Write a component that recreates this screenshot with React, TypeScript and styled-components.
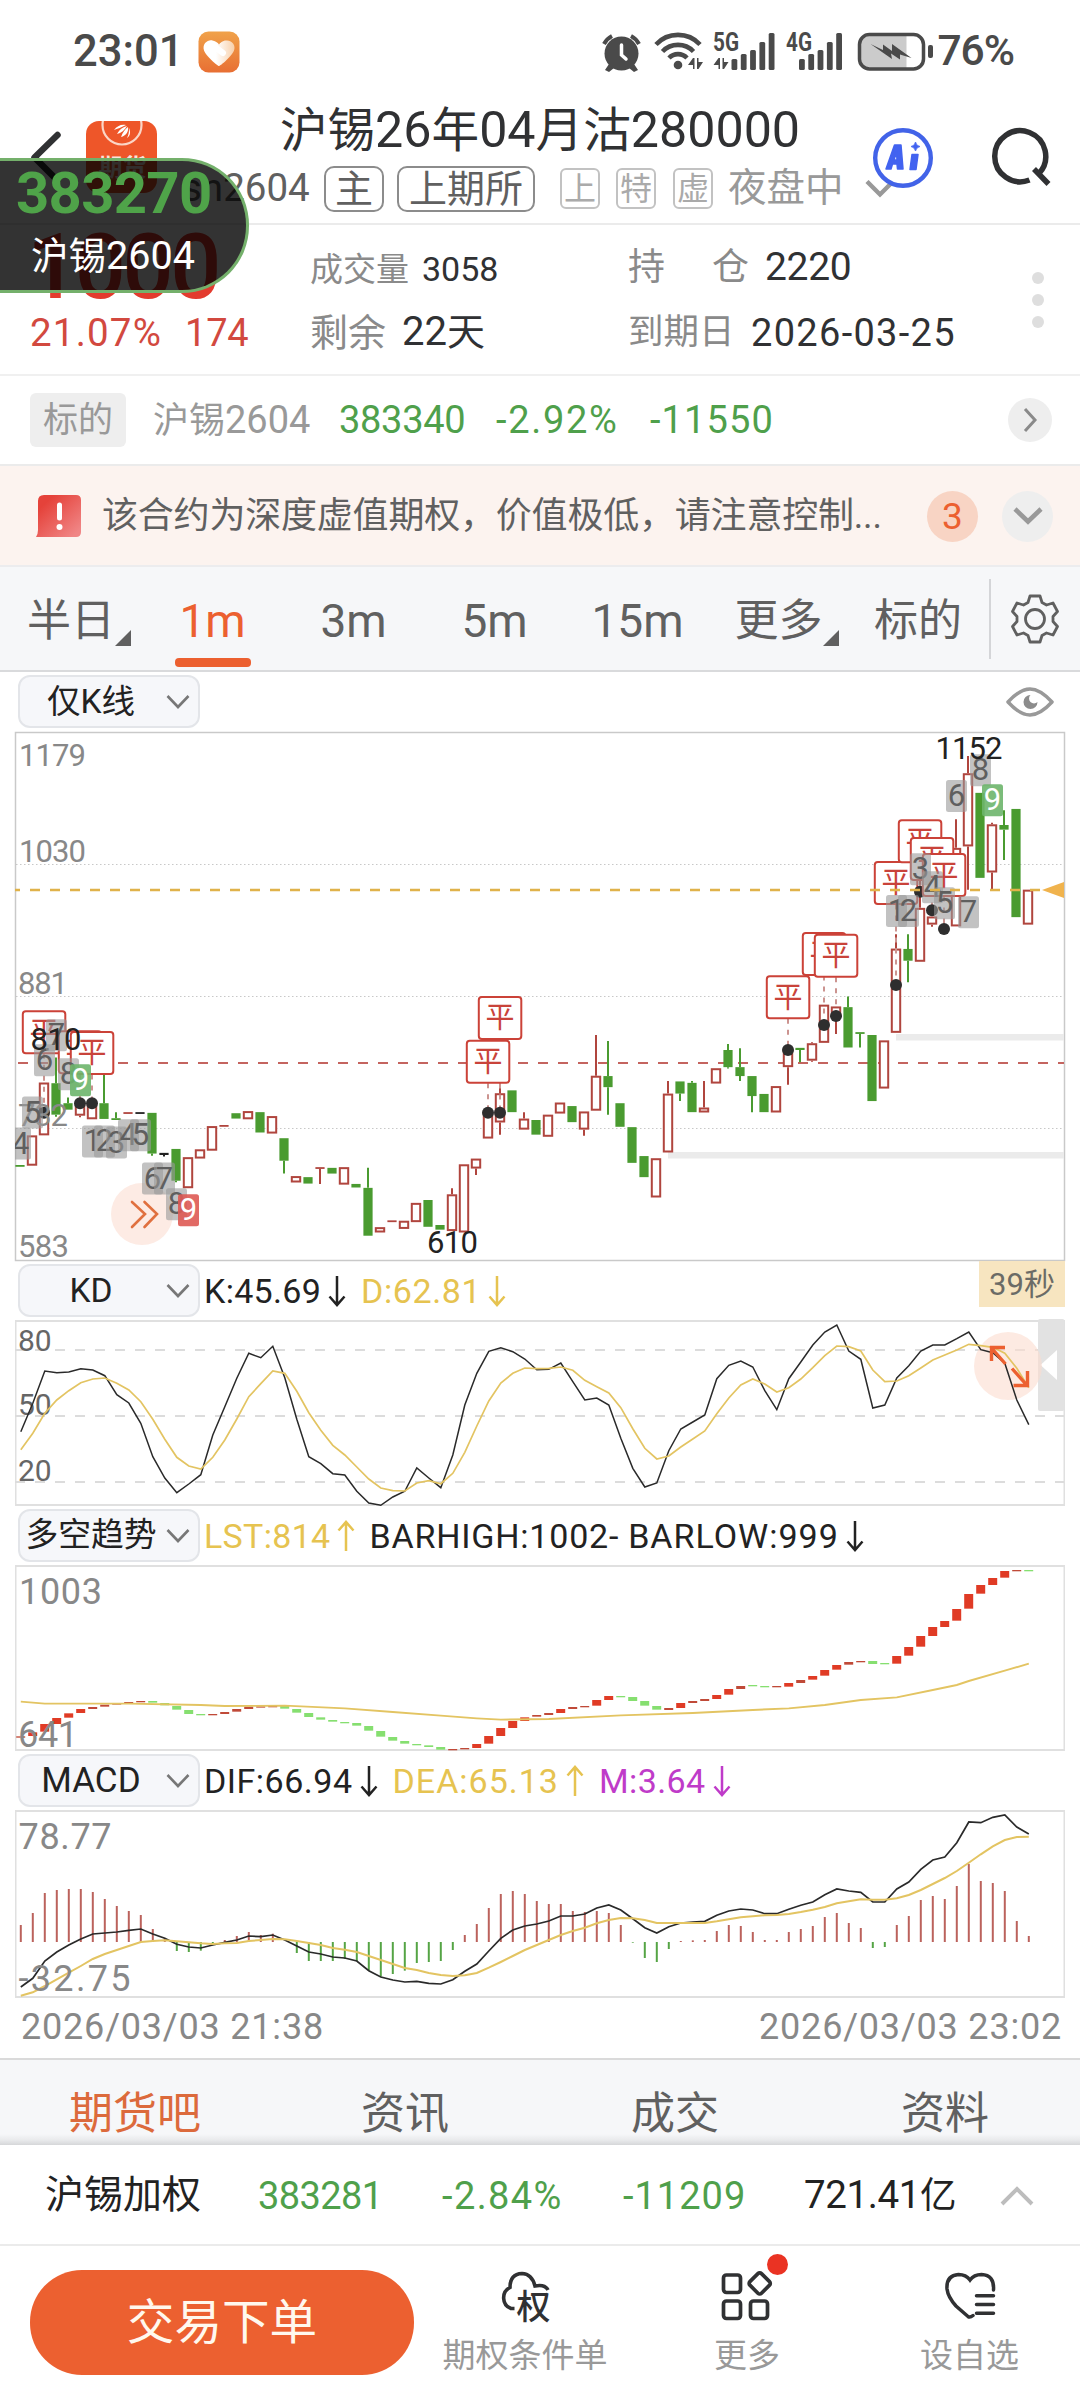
import React from "react";
import styled, { createGlobalStyle } from "styled-components";

const FONT = `Roboto, "Noto Sans CJK SC", sans-serif`;
const ORANGE = "#ec6030";
const GREEN = "#4fa04b";
const YELLOW = "#e6c350";
const INK = "#303133";

const Global = createGlobalStyle`
  * { box-sizing: border-box; }
  body { margin: 0; background: #fff; }
`;

const Screen = styled.main`
  position: relative;
  width: 1080px;
  height: 2400px;
  overflow: hidden;
  display: flex;
  flex-direction: column;
  background: #fff;
  font-family: ${FONT};
  line-height: 1;
  color: ${INK};
  svg { display: block; flex: none; }
  svg text { font-family: ${FONT}; }
`;

const Label = styled.span<{ $size: number; $color?: string; $ls?: number; $weight?: number; $ml?: number; $w?: number }>`
  flex: none;
  white-space: nowrap;
  font-size: ${(p) => p.$size}px;
  color: ${(p) => p.$color ?? INK};
  letter-spacing: ${(p) => p.$ls ?? 0}px;
  font-weight: ${(p) => p.$weight ?? 400};
  margin-left: ${(p) => p.$ml ?? 0}px;
  width: ${(p) => (p.$w ? `${p.$w}px` : "auto")};
`;

/* Digits set slightly larger than the ideographs they sit beside. */
const Num = styled.span`
  font-size: 1.055em;
`;

/* ---------- status bar ---------- */

const StatusBar = styled.div`
  height: 103px;
  padding: 30px 66px 30px 73px;
  display: flex;
  align-items: center;
`;
const Spacer = styled.div`
  flex: 1;
`;

const HeartIcon = styled.svg`
  margin-left: 15px;
`;

const HeartApp = () => (
  <HeartIcon width="42" height="42" viewBox="0 0 42 42">
    <defs>
      <linearGradient id="ha" x1="0" y1="0" x2="0" y2="1">
        <stop offset="0" stopColor="#f0a24a" />
        <stop offset="1" stopColor="#e86f33" />
      </linearGradient>
      <linearGradient id="hb" x1="0" y1="0" x2="1" y2="0">
        <stop offset="0.4" stopColor="#fff" />
        <stop offset="1" stopColor="#f8d0aa" />
      </linearGradient>
    </defs>
    <rect x="0.5" y="0.5" width="41" height="41" rx="10" fill="url(#ha)" />
    <path d="M21 35C19.500 35 8 25 6 19.500C4 13 9.500 8.500 14.500 9.500C18 10.300 20 12 21 13.500C22 12 25 9 29 9.500C34.500 10 38 14.500 36 19.500C33.500 25.500 22.500 35 21 35Z" fill="url(#hb)" />
    <path d="M13 13L25 22" stroke="#fff" strokeWidth="6" strokeLinecap="round" />
  </HeartIcon>
);

const sig = [58, 53, 49, 41, 32];
const StatusIcons = () => (
  <svg width="336" height="44" viewBox="600 29 336 44">
    <g fill="#4a4a4a">
      <circle cx="621.500" cy="52.500" r="17" />
      <path d="M609 63l5 4-5 4-4-2zM634 63l-5 4 5 4 4-2z" />
      <path d="M604 43a19 19 0 0 1 8-8" stroke="#4a4a4a" strokeWidth="4" fill="none" />
      <path d="M639 43a19 19 0 0 0-8-8" stroke="#4a4a4a" strokeWidth="4" fill="none" />
      <path d="M621.500 44V54L626 58" stroke="#fff" strokeWidth="3.500" fill="none" strokeLinecap="round" />
      <g fill="none" stroke="#4a4a4a" strokeWidth="4.600">
        <path d="M656 43.500a30 30 0 0 1 44 0" />
        <path d="M662.500 50.500a21.500 21.500 0 0 1 31 0" />
        <path d="M669 57a12.500 12.500 0 0 1 18 0" />
      </g>
      <circle cx="678" cy="64" r="4.300" />
      <path d="M688 64l5-7h1.500v11h-1.500v-4zM697 57l1.500 0v4h4.500l-4.500 7h-1.500z" />
      <path d="M713.500 64l5-7h1.500v11h-1.500v-4zM722.500 57l1.500 0v4h4.500l-4.500 7h-1.500z" />
      {sig.map((t, i) => (
        <rect key={i} x={731.5 + i * 9.3} y={t} width="5.800" height={69 - t} rx="1.500" />
      ))}
      {sig.map((t, i) => (
        <rect key={i} x={799 + i * 9.3} y={t} width="5.800" height={69 - t} rx="1.500" />
      ))}
      <text x="713" y="50" fontSize="25" fontWeight="700" textLength="26" lengthAdjust="spacingAndGlyphs">5G</text>
      <text x="786" y="50" fontSize="25" fontWeight="700" textLength="26" lengthAdjust="spacingAndGlyphs">4G</text>
      <path d="M870 35H906.500V67H870Q861 67 861 57V45Q861 35 870 35Z" fill="#cbcbcb" />
      <rect x="859.500" y="33.500" width="64" height="34.500" rx="10" fill="none" stroke="#4a4a4a" strokeWidth="3.500" />
      <rect x="928" y="44" width="5" height="13" rx="2" />
      <path d="M870.500 43L883 49V43.500L892 50V43L911.500 57L900 53.500V58.500L891 52.500L892 58Z" />
    </g>
  </svg>
);

/* ---------- header ---------- */

const Header = styled.header`
  height: 122px;
  border-bottom: 2px solid #ebebeb;
  display: grid;
  grid-template-columns: 170px 740px 170px;
`;
const HeaderLeft = styled.div`
  display: flex;
  align-items: flex-start;
  gap: 22px;
  padding: 18px 0 0 28px;
`;
const AppLogo = () => (
  <svg width="72" height="72" viewBox="0 0 72 72">
    <defs>
      <clipPath id="lg"><rect width="71" height="72" rx="13" /></clipPath>
    </defs>
    <g clipPath="url(#lg)">
      <rect width="71" height="72" fill="#ee5629" />
      <circle cx="36" cy="4" r="19.500" fill="#ee5629" stroke="#fbd5c6" strokeWidth="2.200" />
      <path d="M28 9C31 5 35 3 40 4C36 6 31 8 28 9ZM31 13C34 8 37 6 41 5C39 9 35 12 31 13ZM35 16C37 11 39 8 42 6C43 10 40 15 35 16ZM41 17C43 13 43 10 43 7C45 12 44 15 41 17Z" fill="#fff" />
      <text x="36.500" y="55" fontSize="24" fontWeight="700" textAnchor="middle" fill="#fbe3da">期货</text>
    </g>
  </svg>
);
const HeaderCenter = styled.div`
  padding-top: 0;
`;
const Title = styled.h1`
  margin: 0;
  height: 58px;
  line-height: 54px;
  text-align: center;
  font-size: 47.6px;
  font-weight: 400;
  white-space: nowrap;
  color: #303133;
`;
const SubRow = styled.div`
  height: 55px;
  padding-left: 12px;
  display: flex;
  align-items: center;
`;
const Tag = styled.span<{ $w: number; $ml: number; $small?: boolean }>`
  flex: none;
  width: ${(p) => p.$w}px;
  height: ${(p) => (p.$small ? 41 : 46)}px;
  margin-left: ${(p) => p.$ml}px;
  border: ${(p) => (p.$small ? "2px solid #c2c2c2" : "2px solid #8c8c8c")};
  border-radius: ${(p) => (p.$small ? 6 : 10)}px;
  color: ${(p) => (p.$small ? "#aaa" : "#606060")};
  font-size: ${(p) => (p.$small ? 32 : 38)}px;
  display: flex;
  align-items: center;
  justify-content: center;
`;
const SubChevron = styled.svg`
  margin-left: 21px;
`;
const HeaderRight = styled.div`
  display: flex;
  align-items: flex-start;
  gap: 56px;
  margin-left: -38px;
  padding-top: 24px;
`;

/* ---------- quote ---------- */

const Quote = styled.section`
  height: 151px;
  border-bottom: 2px solid #f0f0f0;
  display: grid;
  grid-template-columns: 310px 318px 396px 56px;
`;
const QuoteCell = styled.div<{ $pt?: number }>`
  display: flex;
  flex-direction: column;
  padding-top: ${(p) => p.$pt ?? 19}px;
`;
const QuoteLine = styled.div<{ $h: number }>`
  height: ${(p) => p.$h}px;
  display: flex;
  align-items: center;
`;
const Dots = styled.div`
  padding: 47px 0 0 8px;
  display: flex;
  flex-direction: column;
  gap: 10px;
`;
const Dot = styled.i`
  width: 12px;
  height: 12px;
  border-radius: 50%;
  background: #dedede;
`;

const FloatPill = styled.aside`
  position: absolute;
  left: 0;
  top: 158px;
  width: 249px;
  height: 135px;
  border: 3px solid #74b06b;
  border-left: 0;
  border-radius: 0 67px 67px 0;
  background: rgba(0, 0, 0, 0.8);
  display: flex;
  flex-direction: column;
  gap: 14px;
  padding: 3px 0 0 16px;
`;

/* ---------- underlying and notice ---------- */

const Underlying = styled.section`
  height: 90px;
  padding: 0 28px 0 30px;
  border-bottom: 2px solid #ebebeb;
  display: flex;
  align-items: center;
`;
const Badge = styled.span`
  width: 96px;
  height: 54px;
  border-radius: 6px;
  background: #eeeeee;
  color: #999;
  font-size: 35px;
  display: flex;
  align-items: center;
  justify-content: center;
`;
const Round = styled.span<{ $d: number; $bg: string; $ml?: number }>`
  flex: none;
  width: ${(p) => p.$d}px;
  height: ${(p) => p.$d}px;
  margin-left: ${(p) => p.$ml ?? 0}px;
  border-radius: 50%;
  background: ${(p) => p.$bg};
  color: ${ORANGE};
  font-size: 37px;
  display: flex;
  align-items: center;
  justify-content: center;
`;
const Notice = styled.section`
  height: 101px;
  padding: 1px 27px 0 36px;
  border-bottom: 2px solid #ececee;
  background: #fcf3ef;
  display: flex;
  align-items: center;
`;

/* ---------- period tabs ---------- */

const Periods = styled.nav`
  height: 105px;
  border-bottom: 2px solid #d9dadc;
  background: #f6f7f9;
  display: grid;
  grid-template-columns: 142px 141px 141px 141px 145px 137px 142px 91px;
`;
const Period = styled.div<{ $active?: boolean }>`
  display: flex;
  flex-direction: column;
  align-items: center;
  padding-top: 32px;
  color: ${(p) => (p.$active ? ORANGE : "#606060")};
`;
const PeriodText = styled.span<{ $latin?: boolean }>`
  height: 59px;
  line-height: 44px;
  font-size: ${(p) => (p.$latin ? 46 : 44)}px;
  display: flex;
`;
const Corner = styled.i`
  align-self: flex-start;
  margin: 31px -16px 0 0;
  border-left: 16px solid transparent;
  border-bottom: 16px solid #606060;
`;
const Underline = styled.i`
  width: 76px;
  height: 9px;
  border-radius: 4px;
  background: ${ORANGE};
`;
const GearCell = styled.div`
  margin: 12px 0 11px;
  padding-right: 2px;
  border-left: 2px solid #d4d5d8;
  display: flex;
  align-items: center;
  justify-content: center;
`;

/* ---------- chart panels ---------- */

const PanelHead = styled.div<{ $h: number; $pt: number }>`
  height: ${(p) => p.$h}px;
  padding: ${(p) => p.$pt}px 15px 0 18px;
  display: flex;
  align-items: flex-start;
`;
const SelectBox = styled.div`
  width: 182px;
  height: 53px;
  flex: none;
  border: 2px solid #e3e5e9;
  border-radius: 12px;
  background: #f6f7fa;
  display: flex;
  align-items: center;
  padding-right: 8px;
  color: #222;
`;
const SelectText = styled.span<{ $size?: number }>`
  flex: 1;
  padding-right: 4px;
  text-align: center;
  white-space: nowrap;
  font-size: ${(p) => p.$size ?? 33.5}px;
`;
const Reading = styled.div<{ $color: string; $ml: number; $ls?: number }>`
  height: 53px;
  margin-left: ${(p) => p.$ml}px;
  display: flex;
  align-items: center;
  font-size: 34px;
  letter-spacing: ${(p) => p.$ls ?? 0}px;
  white-space: nowrap;
  color: ${(p) => p.$color};
`;
const ArrowIcon = styled.svg`
  margin-left: 7px;
`;
const Countdown = styled.div`
  width: 86px;
  height: 46px;
  margin-top: -3px;
  background: #f7e5c0;
  color: #6b6b66;
  font-size: 31px;
  display: flex;
  align-items: center;
  justify-content: center;
`;
const EyeWrap = styled.div`
  padding: 12px 11px 0 0;
`;
const Dates = styled.div`
  height: 59px;
  padding: 0 18px 4px 21px;
  display: flex;
  align-items: center;
  justify-content: space-between;
`;

const Select = ({ children, size }: { children: React.ReactNode; size?: number }) => (
  <SelectBox>
    <SelectText $size={size}>{children}</SelectText>
    <svg width="24" height="16" viewBox="0 0 24 16">
      <path d="M1.500 2L12 13L22.500 2" fill="none" stroke="#777" strokeWidth="2.600" />
    </svg>
  </SelectBox>
);

const Arrow = ({ up }: { up?: boolean }) => (
  <ArrowIcon width="18" height="32" viewBox="0 0 18 32">
    <path
      d={up ? "M9 31V2M1.500 10.500L9 2L16.500 10.500" : "M9 1V30M1.500 21.500L9 30L16.500 21.500"}
      fill="none"
      stroke="currentColor"
      strokeWidth="2.500"
    />
  </ArrowIcon>
);

/* Slot centres run every 12px; slot 0 of the indicators sits at x = 20. */
const slot = (i: number) => 20 + i * 12;

type Candle = [string, number, number, number?, number?];
/* kind, body top, body bottom, high, low; levels are 1/2.8 px below y = 720 */
const CANDLES: Candle[] = [
  ["g", 1246, 1251], ["r", 1163, 1248], ["r", 1015, 1163], ["g", 1017, 1105, 945, 1111], ["g", 1073, 1091, 1057],
  ["r", 1073, 1108, 1073, 1112], ["r", 1073, 1118], ["g", 1073, 1117, 993], ["g", 1115, 1120, 1098], ["r", 1098, 1103],
  ["k", 1098, 1103], ["g", 1100, 1214, 1100, 1220], ["k", 1212, 1218, 1212, 1222], ["g", 1201, 1290, 1201, 1294], ["r", 1224, 1311],
  ["r", 1202, 1228], ["r", 1137, 1206], ["r", 1134, 1139], ["g", 1101, 1116], ["r", 1095, 1118],
  ["g", 1098, 1155], ["r", 1109, 1158], ["g", 1171, 1234, 1171, 1270], ["r", 1277, 1295], ["g", 1280, 1298],
  ["r", 1252, 1257, 1252, 1299], ["g", 1254, 1270], ["r", 1252, 1301], ["g", 1299, 1309], ["g", 1310, 1444, 1254],
  ["r", 1420, 1435], ["r", 1401, 1406], ["r", 1402, 1425], ["r", 1352, 1406], ["g", 1344, 1419],
  ["g", 1414, 1427], ["r", 1328, 1431, 1311], ["r", 1244, 1435], ["r", 1228, 1256, 1228, 1274], ["r", 1100, 1172],
  ["r", 1045, 1127, 1017, 1161], ["g", 1037, 1098], ["r", 1116, 1147, 1098], ["g", 1120, 1161], ["r", 1105, 1167],
  ["r", 1071, 1102], ["g", 1081, 1126], ["r", 1096, 1147, 1096, 1164], ["r", 996, 1094, 882], ["g", 997, 1028, 899, 1105],
  ["g", 1073, 1139], ["g", 1140, 1240], ["g", 1221, 1280], ["r", 1227, 1337], ["r", 1046, 1211, 1011],
  ["g", 1012, 1046, 1012, 1067], ["g", 1016, 1098, 1011], ["r", 1085, 1099, 1011], ["r", 975, 1018], ["g", 924, 972, 907, 976],
  ["g", 972, 997, 919, 1011], ["g", 997, 1053, 997, 1098], ["g", 1047, 1098], ["r", 1025, 1099], ["r", 925, 972, 925, 1021],
  ["g", 918, 924, 918, 958], ["r", 905, 954, 902, 957], ["r", 797, 904], ["r", 802, 829, 802, 879], ["g", 804, 917, 774],
  ["g", 874, 879, 874, 917], ["g", 882, 1067], ["r", 897, 1032], ["r", 640, 876, 600], ["g", 641, 674, 600, 734],
  ["r", 526, 677, 450], ["r", 550, 573, 550, 579], ["r", 580, 585], ["r", 358, 578, 278], ["r", 149, 354, 101, 475],
  ["g", 204, 442], ["r", 292, 427, 288, 475], ["g", 294, 307, 253, 392], ["g", 249, 552], ["r", 475, 573],
];
const lv = (v: number) => 720 + v / 2.8;

const CLOSES: [number, number, number][] = [
  [2, 814, 1100], [5, 870, 1073], [6, 872, 1073], [40, 774, 1100], [39, 897, 1100], [64, 716, 924],
  [67, 595, 854], [68, 600, 829], [73, 396, 742], [75, 279, 481], [76, 329, 533], [77, 374, 585],
];
const COUNTS: [number, number, number][] = [
  [0, 1186, 4], [1, 1099, 5], [2, 953, 6], [3, 883, 7], [4, 992, 8], [5, 1009, 9],
  [6, 1180, 1], [7, 1180, 2], [8, 1183, 3], [9, 1163, 4], [10, 1163, 5], [11, 1284, 6], [12, 1284, 7], [13, 1356, 8], [14, 1373, -9],
  [73, 535, 1], [74, 535, 2], [75, 418, 3], [76, 468, 4], [77, 513, 5], [78, 213, 6], [79, 538, 7], [80, 141, 8], [81, 225, 9],
];

const KLine = () => (
  <svg width="1080" height="531" viewBox="0 731 1080 531">
    <defs><clipPath id="kc"><rect x="15" y="732" width="1050" height="529" /></clipPath></defs>
    <rect x="15.500" y="732.500" width="1049" height="528" fill="#fff" stroke="#c9c9c9" strokeWidth="1.500" />
    {[864.5, 996.5, 1128.5].map((y) => (
      <line key={y} x1="16" x2="1064" y1={y} y2={y} stroke="#c8c8c8" strokeWidth="1.200" strokeDasharray="1.500 2.500" />
    ))}
    <rect x="896" y="1034" width="168" height="6.500" fill="#ebebeb" />
    <rect x="668" y="1152" width="396" height="6.500" fill="#ebebeb" />
    <line x1="18" x2="1064" y1="1063" y2="1063" stroke="#c4645f" strokeWidth="2" strokeDasharray="10 10" />
    <circle cx="142" cy="1214" r="31" fill="#fdebe4" />
    <path d="M132 1202L145 1214L132 1227M144.500 1202L157 1214L144.500 1227" fill="none" stroke="#e0703f" strokeWidth="2.600" strokeLinecap="round" />
    <g clipPath="url(#kc)">
      {CANDLES.map(([k, t, b, h, l], i) => {
        const x = slot(i);
        const c = k === "r" ? "#b0453e" : k === "g" ? "#4a9b30" : "#222";
        const flat = b - t < 7;
        return (
          <g key={i}>
            {h !== undefined && h < t && <line x1={x} x2={x} y1={lv(h)} y2={lv(t)} stroke={c} strokeWidth="2" />}
            {l !== undefined && l > b && <line x1={x} x2={x} y1={lv(b)} y2={lv(l)} stroke={c} strokeWidth="2" />}
            {k === "r" && !flat ? (
              <rect x={x - 4.2} y={lv(t) + 1} width="8.400" height={(b - t) / 2.8 - 2} fill="#fff" stroke={c} strokeWidth="2" />
            ) : (
              <rect x={x - 4.6} y={lv(t)} width="9.200" height={(b - t) / 2.8} fill={c} />
            )}
          </g>
        );
      })}
      {CLOSES.map(([i, t, d]) => (
        <g key={i}>
          <line x1={slot(i)} x2={slot(i)} y1={lv(t) + 43} y2={lv(d)} stroke="#cc9490" strokeWidth="2" strokeDasharray="5 6" />
          <circle cx={slot(i)} cy={lv(d)} r="6" fill="#2e2e2e" />
          <rect x={slot(i) - 21.2} y={lv(t) + 0.5} width="42.500" height="42" rx="3" fill="#fff" stroke="#cb4238" strokeWidth="2" />
          <text x={slot(i)} y={lv(t) + 32} fontSize="29" textAnchor="middle" fill="#c9433a">平</text>
        </g>
      ))}
      <g fontSize="31" fill="#888">
        <text x="19" y="765.500" textLength="67">1179</text>
        <text x="19" y="862" textLength="67">1030</text>
        <text x="18" y="994" textLength="50">881</text>
        <text x="18" y="1125.500" textLength="50">732</text>
        <text x="18" y="1257" textLength="51">583</text>
      </g>
      {COUNTS.map(([i, y, n]) => {
        const nine = Math.abs(n) === 9;
        return (
          <g key={i}>
            <rect x={slot(i) - 10} y={lv(y) - 16} width="21" height="32" rx="2.500" fill={nine ? (n > 0 ? "#6db56b" : "#de5a54") : "#999"} fillOpacity={nine ? 0.9 : 0.6} />
            <text x={slot(i) + 0.5} y={lv(y) + 10} fontSize="31" textAnchor="middle" fill={nine ? "#fff" : "#5f5f5f"}>{Math.abs(n)}</text>
          </g>
        );
      })}
      <line x1="10" x2="1042" y1="890" y2="890" stroke="#e0b24a" strokeWidth="2.400" strokeDasharray="10 10" />
      <path d="M1042 890L1064 882V898Z" fill="#f0b34d" />
      <g fontSize="31" fill="#222">
        <text x="30.500" y="1050" textLength="51">810</text>
        <text x="427" y="1253" textLength="51">610</text>
        <text x="935.500" y="759" textLength="67">1152</text>
      </g>
    </g>
  </svg>
);

const K = [545, 460, 363, 368, 366, 356, 360, 377, 434, 459, 520, 620, 684, 728, 702, 674, 555, 470, 385, 310, 323, 289, 383, 508, 620, 641, 671, 675, 724, 759, 766, 741, 724, 654, 684, 713, 615, 465, 370, 304, 293, 305, 327, 359, 358, 339, 395, 450, 444, 465, 565, 655, 711, 699, 602, 537, 516, 495, 386, 346, 333, 351, 422, 479, 386, 336, 285, 246, 225, 303, 328, 474, 465, 384, 347, 303, 285, 285, 266, 246, 299, 308, 340, 450, 524];
const D = [599, 550, 490, 450, 422, 398, 387, 384, 400, 420, 455, 508, 568, 622, 648, 657, 622, 570, 507, 440, 401, 363, 370, 424, 488, 541, 586, 615, 651, 687, 714, 722, 723, 699, 692, 701, 670, 607, 528, 453, 399, 370, 354, 356, 355, 351, 361, 391, 410, 429, 473, 536, 595, 627, 618, 591, 567, 543, 491, 444, 405, 387, 402, 426, 413, 387, 353, 317, 288, 290, 303, 360, 395, 393, 377, 354, 330, 315, 300, 283, 287, 292, 310, 355, 413];
const poly = (v: number[], base: number) => v.map((y, i) => `${slot(i) + 0.8},${(base + y / 3).toFixed(1)}`).join(" ");

const Frame = ({ top, bottom }: { top: number; bottom: number }) => (
  <g fill="#e0e0e0">
    <rect x="15" y={top} width="1050" height="2" />
    <rect x="15" y={bottom - 2} width="1050" height="2" />
    <rect x="15" y={top} width="1.500" height={bottom - top} />
    <rect x="1063.500" y={top} width="1.500" height={bottom - top} />
  </g>
);

const KdChart = () => (
  <svg width="1080" height="189" viewBox="0 1318 1080 189">
    <Frame top={1320} bottom={1506} />
    {[1350, 1416, 1482].map((y) => (
      <line key={y} x1="15" x2="1064" y1={y} y2={y} stroke="#dcdcdc" strokeWidth="2" strokeDasharray="10 10" />
    ))}
    <g fontSize="30" fill="#666">
      <text x="18" y="1351">80</text>
      <text x="18" y="1415">50</text>
      <text x="18" y="1481">20</text>
    </g>
    <rect x="1038" y="1319" width="26.500" height="92" rx="2" fill="#e2e2e2" />
    <path d="M1040.500 1365L1057 1350V1380Z" fill="#fff" />
    <circle cx="1008" cy="1366" r="34" fill="#fcdccf" fillOpacity="0.600" />
    <polyline points={poly(K, 1250)} fill="none" stroke="#2a2a2a" strokeWidth="1.500" />
    <polyline points={poly(D, 1250)} fill="none" stroke="#e3c462" strokeWidth="1.700" />
    <path d="M1005.500 1364L991.500 1348M1005 1347.500H991.500V1361M1012 1368.500L1027 1385.500M1013.500 1385.500H1027.500V1371" fill="none" stroke={ORANGE} strokeWidth="3.400" />
  </svg>
);

const TREND =
  "r709-713 r697-708 r672-695 r654-672 r640-653 r627-639 r621-627 r614-620 r610-612 r606-608 r603-605 g603-608 g609-616 g618-629 g630-642 g642-644 r642-644 r636-642 r627-635 r620-627 r619-621 r618-620 g618-626 g627-638 g639-651 g652-659 g660-665 g666-668 g669-677 g678-692 g693-710 g711-722 g723-731 g732-734 g736-741 g741-749 r747-749 r744-748 r732-744 r708-731 r684-708 r663-684 r652-663 r645-650 r639-645 r627-639 r621-627 r618-621 r600-617 r588-600 g588-590 g591-603 g603-617 g618-629 r624-630 r609-624 r603-609 r597-603 r585-597 r567-584 r558-567 g555-557 g558-560 r558-560 r549-560 r540-549 r528-539 r510-527 r495-509 r486-494 r483-485 g483-492 g489-491 r468-491 r441-467 r408-440 r381-408 r363-381 r327-362 r282-326 r255-281 r234-255 r213-233 r210-212 g210-212".split(" ");
const LST: [number, number][] = [[0, 605], [2, 611], [9, 611], [15, 615], [17, 618], [22, 617], [27, 625], [31, 636], [35, 647], [38, 655], [40, 659], [44, 657], [50, 646], [56, 639], [61, 630], [64, 625], [67, 615], [70, 600], [73, 592], [76, 570], [78, 555], [79, 543], [82, 512], [84, 491]];

const TrendChart = () => (
  <svg width="1080" height="186" viewBox="0 1565 1080 186">
    <defs><clipPath id="tc"><rect x="15" y="1565" width="1050" height="186" /></clipPath></defs>
    <Frame top={1565} bottom={1751} />
    <g clipPath="url(#tc)">
      {TREND.map((s, i) => {
        const [t, b] = s.slice(1).split("-").map(Number);
        return <rect key={i} x={slot(i) - 3.8} y={1500 + t / 3} width="9" height={Math.max((b - t) / 3, 1.3)} fill={s[0] === "r" ? (b - t > 9 ? "#e03b25" : "#c04a38") : "#86df70"} />;
      })}
    </g>
    <polyline points={LST.map(([i, y]) => `${slot(i) + 0.8},${1500 + y / 3}`).join(" ")} fill="none" stroke="#e3c462" strokeWidth="1.900" />
    <g fontSize="36" fill="#888">
      <text x="19" y="1604" textLength="83">1003</text>
      <text x="18" y="1746.500" textLength="60">641</text>
    </g>
  </svg>
);

const HIST = [555, 519, 459, 450, 447, 447, 456, 477, 498, 513, 525, 567, 594, 633, 636, 632, 615, 600, 588, 576, 585, 581, 606, 639, 663, 663, 663, 657, 663, 692, 710, 702, 692, 669, 666, 663, 630, 585, 552, 504, 462, 453, 462, 483, 492, 492, 513, 516, 513, 519, 555, 608, 654, 666, 627, 603, 601, 600, 573, 555, 558, 576, 600, 600, 576, 567, 558, 531, 519, 549, 564, 624, 621, 555, 528, 480, 468, 477, 438, 372, 423, 429, 453, 543, 588];
const DIF = [741, 715, 663, 636, 615, 597, 582, 579, 576, 571, 567, 582, 595, 613, 621, 624, 615, 607, 600, 588, 590, 585, 600, 618, 636, 642, 651, 654, 663, 692, 711, 720, 726, 724, 730, 732, 719, 694, 672, 633, 595, 570, 558, 552, 543, 528, 528, 522, 504, 495, 510, 536, 563, 579, 560, 549, 546, 544, 526, 513, 507, 510, 521, 521, 508, 496, 486, 464, 447, 453, 457, 486, 486, 447, 426, 388, 360, 351, 308, 246, 248, 232, 225, 261, 282];
const DEA = [767, 757, 738, 718, 698, 678, 657, 642, 630, 618, 606, 603, 601, 604, 607, 610, 612, 610, 609, 603, 600, 597, 598, 603, 609, 615, 624, 629, 636, 648, 660, 672, 684, 690, 699, 705, 708, 706, 699, 683, 666, 648, 630, 615, 600, 585, 573, 563, 550, 540, 534, 535, 540, 549, 549, 549, 549, 549, 544, 538, 532, 529, 526, 525, 522, 516, 509, 501, 490, 484, 478, 479, 479, 475, 465, 450, 432, 414, 393, 368, 343, 319, 300, 291, 290];

const MacdChart = () => (
  <svg width="1080" height="189" viewBox="0 1810 1080 189">
    <Frame top={1810} bottom={1998} />
    {HIST.map((v, i) => (
      <line key={i} x1={slot(i) + 0.8} x2={slot(i) + 0.8} y1="1942" y2={1740 + v / 3} stroke={v > 606 ? "#55a445" : "#bb625c"} strokeWidth="2" />
    ))}
    <polyline points={poly(DIF, 1740)} fill="none" stroke="#2a2a2a" strokeWidth="1.700" />
    <polyline points={poly(DEA, 1740)} fill="none" stroke="#e3c462" strokeWidth="2" />
    <g fontSize="36" fill="#888">
      <text x="18.500" y="1849" textLength="93">78.77</text>
      <text x="18.500" y="1991" textLength="112">-32.75</text>
    </g>
  </svg>
);

/* ---------- bottom ---------- */

const BottomTabs = styled.nav`
  height: 87px;
  border-top: 2px solid #dadada;
  background: linear-gradient(#f6f7f9 0, #f6f7f9 74px, #e9eaec 80px, #d2d3d5 86px);
  display: grid;
  grid-template-columns: repeat(4, 270px);
`;
const BottomTab = styled.span<{ $active?: boolean }>`
  padding-top: 32px;
  text-align: center;
  font-size: 44px;
  color: ${(p) => (p.$active ? "#dc6a3c" : "#606060")};
`;
const IndexRow = styled.section`
  height: 101px;
  padding: 2px 0 0 45px;
  border-bottom: 2px solid #ebebeb;
  display: flex;
  align-items: center;
`;
const ActionBar = styled.footer`
  flex: 1;
  display: flex;
  padding: 24px 0 0 30px;
`;
const OrderButton = styled.button`
  flex: none;
  width: 384px;
  height: 105px;
  padding: 2px 0 0;
  border: 0;
  border-radius: 52px;
  background: #ec6030;
  color: #fff8ee;
  font-family: inherit;
  font-size: 47.6px;
  line-height: 1;
`;
const Action = styled.div<{ $w: number; $ml: number }>`
  position: relative;
  flex: none;
  width: ${(p) => p.$w}px;
  margin-left: ${(p) => p.$ml}px;
  display: flex;
  flex-direction: column;
  align-items: center;
  font-size: 33px;
  color: #999;
  white-space: nowrap;
`;
const ActionIcon = styled.div`
  height: 69px;
  display: flex;
  align-items: flex-start;
`;
const RedDot = styled.i`
  position: absolute;
  right: -8px;
  top: -16px;
  width: 21px;
  height: 21px;
  border-radius: 50%;
  background: #ea3323;
`;

export default function App() {
  return (
    <Screen>
      <Global />
      <StatusBar>
        <Label $size={43.5} $color="#4a4a4a" $weight={500}>23:01</Label>
        <HeartApp />
        <Spacer />
        <StatusIcons />
        <Label $size={42.5} $color="#4a4a4a" $weight={500} $ls={-1} $ml={1}>76%</Label>
      </StatusBar>

      <Header>
        <HeaderLeft>
          <svg width="36" height="72" viewBox="28 120 36 72">
            <path d="M57.500 134L34.500 156.500L57.500 179.500" fill="none" stroke="#303133" strokeWidth="6.500" strokeLinecap="round" strokeLinejoin="round" />
          </svg>
          <AppLogo />
        </HeaderLeft>
        <HeaderCenter>
          <Title>沪锡<Num>26</Num>年<Num>04</Num>月沽<Num>280000</Num></Title>
          <SubRow>
            <Label $size={38.5} $color="#606060" $w={131}>sn2604</Label>
            <Tag $w={60} $ml={11}>主</Tag>
            <Tag $w={138} $ml={13}>上期所</Tag>
            <Tag $w={40} $ml={25} $small>上</Tag>
            <Tag $w={40} $ml={16} $small>特</Tag>
            <Tag $w={40} $ml={17} $small>虚</Tag>
            <Label $size={38.500} $color="#999" $ml={15}>夜盘中</Label>
            <SubChevron width="30" height="18" viewBox="0 0 30 18">
              <path d="M2 1.500L15 14.500L28 1.500" fill="none" stroke="#999" strokeWidth="4.400" />
            </SubChevron>
          </SubRow>
        </HeaderCenter>
        <HeaderRight>
          <svg width="62" height="62" viewBox="872 127 62 62">
            <circle cx="903" cy="158" r="27.800" fill="#fff" stroke="#4263e8" strokeWidth="4.400" />
            <g fill="#4263f0" stroke="#4263f0" strokeLinejoin="round" strokeWidth="1.500">
              <path fillRule="evenodd" d="M886 169L894.500 145H901L903 169H897.500L897 164H892.500L891 169ZM894 160H897L896.500 152Z" />
              <path d="M912 154.500H918L916 169.500H910Z" />
              <path d="M915.500 142Q916.300 146 920 146.500Q916.300 147.300 915.500 151Q914.700 147.300 911 146.500Q914.700 146 915.500 142Z" strokeWidth="0.800" />
            </g>
          </svg>
          <svg width="62" height="62" viewBox="990 127 62 62">
            <path d="M1029.500 180A25.500 25.500 0 1 1 1039 173.500M1034 169L1048.500 184" fill="none" stroke="#303133" strokeWidth="5.500" />
          </svg>
        </HeaderRight>
      </Header>

      <Quote>
        <QuoteCell $pt={1}>
          <QuoteLine $h={84}>
            <Label $size={90} $color="#e33b2e" $weight={500} $ls={-3.4} $ml={27}>1000</Label>
          </QuoteLine>
          <QuoteLine $h={46}>
            <Label $size={38.5} $color="#d2493f" $ml={30} $w={155} $ls={1.2}>21.07%</Label>
            <Label $size={38} $color="#d2493f" $ls={-0.2}>174</Label>
          </QuoteLine>
        </QuoteCell>
        <QuoteCell>
          <QuoteLine $h={50}>
            <Label $size={33} $color="#8a8a8a" $w={112}>成交量</Label>
            <Label $size={34}>3058</Label>
          </QuoteLine>
          <QuoteLine $h={77}>
            <Label $size={38} $color="#8a8a8a" $w={92}>剩余</Label>
            <Label $size={38}><Num>22</Num>天</Label>
          </QuoteLine>
        </QuoteCell>
        <QuoteCell>
          <QuoteLine $h={47}>
            <Label $size={37} $color="#8a8a8a" $w={84}>持</Label>
            <Label $size={37} $color="#8a8a8a" $w={53}>仓</Label>
            <Label $size={39} $ls={-0.3}>2220</Label>
          </QuoteLine>
          <QuoteLine $h={84}>
            <Label $size={35.5} $color="#8a8a8a" $w={123}>到期日</Label>
            <Label $size={38} $ls={1.3}>2026-03-25</Label>
          </QuoteLine>
        </QuoteCell>
        <Dots><Dot /><Dot /><Dot /></Dots>
      </Quote>

      <Underlying>
        <Badge>标的</Badge>
        <Label $size={36} $color="#999" $ml={27} $w={185}>沪锡<Num>2604</Num></Label>
        <Label $size={38} $color={GREEN} $ml={1} $w={157} $ls={-0.3}>383340</Label>
        <Label $size={38} $color={GREEN} $w={154} $ls={1.7}>-2.92%</Label>
        <Label $size={38} $color={GREEN} $ls={1.1}>-11550</Label>
        <Spacer />
        <Round $d={44} $bg="#eee">
          <svg width="16" height="26" viewBox="0 0 16 26"><path d="M3 2L13 13L3 24" fill="none" stroke="#8a8a8a" strokeWidth="3" /></svg>
        </Round>
      </Underlying>

      <Notice>
        <svg width="46" height="44" viewBox="0 0 46 44">
          <defs><linearGradient id="nt" x1="0" y1="0" x2="1" y2="1"><stop offset="0.200" stopColor="#e5423a" /><stop offset="0.900" stopColor="#f08585" /></linearGradient></defs>
          <path d="M8 1H40Q45 1 45 6V38Q45 43 40 43H0Q2 40 2 36V7Q2 1 8 1Z" fill="url(#nt)" />
          <path d="M23.500 11V24" stroke="#fff" strokeWidth="5" strokeLinecap="round" />
          <circle cx="23.500" cy="33" r="3" fill="#fff" />
        </svg>
        <Label $size={36} $color="#606060" $ml={20} $w={785} $ls={-0.2}>该合约为深度虚值期权，价值极低，请注意控制...</Label>
        <Spacer />
        <Round $d={51} $bg="#f8d4c4">3</Round>
        <Round $d={51} $bg="#eeeeee" $ml={24}>
          <svg width="30" height="20" viewBox="0 0 30 20"><path d="M2 3L15 15.500L28 3" fill="none" stroke="#999" strokeWidth="4.600" /></svg>
        </Round>
      </Notice>

      <Periods>
        <Period><PeriodText>半日<Corner /></PeriodText></Period>
        <Period $active><PeriodText $latin>1m</PeriodText><Underline /></Period>
        <Period><PeriodText $latin>3m</PeriodText></Period>
        <Period><PeriodText $latin>5m</PeriodText></Period>
        <Period><PeriodText $latin>15m</PeriodText></Period>
        <Period><PeriodText>更多<Corner /></PeriodText></Period>
        <Period><PeriodText>标的</PeriodText></Period>
        <GearCell>
          <svg width="48" height="50" viewBox="-24 -25 48 50">
            <path d="M-5 -23H5L7 -16.500L11.500 -14L18 -16L22.500 -7.500L18 -2.500V2.500L22.500 7.500L18 16L11.500 14L7 16.500L5 23H-5L-7 16.500L-11.500 14L-18 16L-22.500 7.500L-18 2.500V-2.500L-22.500 -7.500L-18 -16L-11.500 -14L-7 -16.500Z" fill="none" stroke="#606060" strokeWidth="2.800" strokeLinejoin="round" />
            <circle r="9.500" fill="none" stroke="#606060" strokeWidth="2.800" />
          </svg>
        </GearCell>
      </Periods>

      <PanelHead $h={59} $pt={3}>
        <Select>仅K线</Select>
        <Spacer />
        <EyeWrap>
          <svg width="48" height="30" viewBox="-24 -15 48 30">
            <path d="M-22 0Q-10 -13 0 -13Q10 -13 22 0Q10 13 0 13Q-10 13 -22 0Z" fill="none" stroke="#999" strokeWidth="3.500" strokeLinejoin="round" />
            <path d="M0.500 -7A7 7 0 1 0 7.500 0A4.500 4.500 0 0 1 0.500 -7Z" fill="#8c8c8c" />
          </svg>
        </EyeWrap>
      </PanelHead>
      <KLine />

      <PanelHead $h={56} $pt={2}>
        <Select>KD</Select>
        <Reading $color="#222" $ml={4} $ls={0.3}>K:45.69<Arrow /></Reading>
        <Reading $color={YELLOW} $ml={15} $ls={0.6}>D:62.81<Arrow /></Reading>
        <Spacer />
        <Countdown>39秒</Countdown>
      </PanelHead>
      <KdChart />

      <PanelHead $h={58} $pt={2}>
        <Select size={32.8}>多空趋势</Select>
        <Reading $color={YELLOW} $ml={4} $ls={0.3}>LST:814<Arrow up /></Reading>
        <Reading $color="#222" $ml={14} $ls={0.8}>BARHIGH:1002-</Reading>
        <Reading $color="#222" $ml={9} $ls={1}>BARLOW:999<Arrow /></Reading>
      </PanelHead>
      <TrendChart />

      <PanelHead $h={59} $pt={3}>
        <Select size={35}>MACD</Select>
        <Reading $color="#222" $ml={4} $ls={0.5}>DIF:66.94<Arrow /></Reading>
        <Reading $color={YELLOW} $ml={15} $ls={1}>DEA:65.13<Arrow up /></Reading>
        <Reading $color="#bf3bc9" $ml={15} $ls={0.4}>M:3.64<Arrow /></Reading>
      </PanelHead>
      <MacdChart />

      <Dates>
        <Label $size={36} $color="#888" $ls={0.8}>2026/03/03 21:38</Label>
        <Label $size={36} $color="#888" $ls={0.8}>2026/03/03 23:02</Label>
      </Dates>

      <BottomTabs>
        <BottomTab $active>期货吧</BottomTab>
        <BottomTab>资讯</BottomTab>
        <BottomTab>成交</BottomTab>
        <BottomTab>资料</BottomTab>
      </BottomTabs>

      <IndexRow>
        <Label $size={39} $color="#222" $w={213}>沪锡加权</Label>
        <Label $size={38} $color={GREEN} $w={184} $ls={-0.6}>383281</Label>
        <Label $size={38} $color={GREEN} $w={181} $ls={1.4}>-2.84%</Label>
        <Label $size={38} $color={GREEN} $w={181} $ls={1}>-11209</Label>
        <Label $size={36.5} $color="#222" $w={196} $ls={-0.4}><Num>721.41</Num>亿</Label>
        <svg width="34" height="20" viewBox="0 0 34 20"><path d="M2 18L17 3L32 18" fill="none" stroke="#bdbdbd" strokeWidth="4" /></svg>
      </IndexRow>

      <ActionBar>
        <OrderButton>交易下单</OrderButton>
        <Action $w={166} $ml={28}>
          <ActionIcon>
            <svg width="60" height="56" viewBox="497 2270 60 56">
              <path d="M516.500 2308.500H513A11.500 11.500 0 0 1 512 2287.500Q512 2274 524 2273.500Q534 2274 537 2286Q547 2284 550 2290" fill="none" stroke="#303133" strokeWidth="3.600" />
              <text x="535.500" y="2319" fontSize="34" fontWeight="500" textAnchor="middle" fill="#303133">权</text>
            </svg>
          </ActionIcon>
          期权条件单
        </Action>
        <Action $w={66} $ml={106}>
          <ActionIcon>
            <svg width="52" height="54" viewBox="720 2270 52 54">
              <g fill="none" stroke="#303133" strokeWidth="3.700">
                <rect x="722.500" y="2275" width="17" height="17.500" rx="3" />
                <rect x="722.500" y="2301" width="17" height="17.500" rx="3" />
                <rect x="749.500" y="2301" width="17" height="17.500" rx="3" />
                <rect x="750.500" y="2275.200" width="16.400" height="16.400" rx="2.500" transform="rotate(45 758.700 2283.400)" />
              </g>
            </svg>
          </ActionIcon>
          更多
          <RedDot />
        </Action>
        <Action $w={99} $ml={140}>
          <ActionIcon>
            <svg width="56" height="54" viewBox="941 2270 56 54">
              <path d="M992.500 2290Q993.500 2275 980.500 2274.500Q973 2274.500 969 2280Q965 2274.500 957.500 2274.500Q945 2275.500 946 2289Q947 2297 955 2306L967 2316.500Q969 2318 972 2315.500M975.500 2295.700H992.500M975.500 2304.500H992.500M975.500 2313.300H992.500" fill="none" stroke="#303133" strokeWidth="3.500" strokeLinecap="round" />
            </svg>
          </ActionIcon>
          设自选
        </Action>
      </ActionBar>

      <FloatPill>
        <Label $size={58} $color="#4fa349" $weight={700} $ls={-0.7}>383270</Label>
        <Label $size={37.5} $color="#fff" $ml={15}>沪锡<Num>2604</Num></Label>
      </FloatPill>
    </Screen>
  );
}
